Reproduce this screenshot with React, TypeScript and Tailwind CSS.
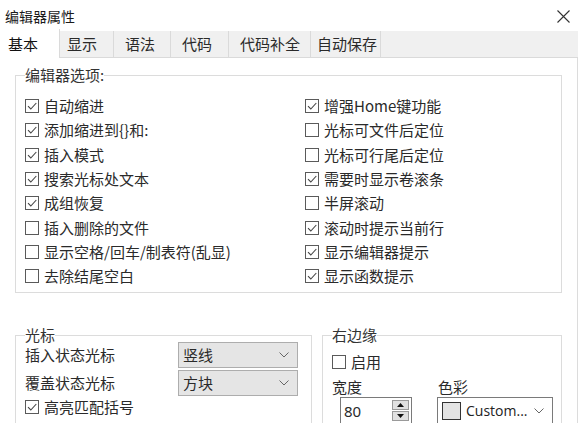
import React from "react";

const F = "font-['Noto_Sans_CJK_SC','Noto_Sans',sans-serif]";

function Cb({ checked, label }: { checked?: boolean; label: string }) {
  return (
    <div className="flex items-center h-full">
      <span className="w-[14px] h-[14px] border border-[#5a5a5a] bg-white flex items-center justify-center shrink-0">
        {checked && (
          <svg width="12" height="12" viewBox="0 0 12 12">
            <path d="M2 6.2 L4.8 9 L10.3 3" fill="none" stroke="#444" strokeWidth="1.1" />
          </svg>
        )}
      </span>
      <span className="ml-[5px] text-[15px] leading-[20px] text-[#2a2a2a] whitespace-nowrap">{label}</span>
    </div>
  );
}

function Chevron() {
  return (
    <svg width="10" height="6" viewBox="0 0 10 6">
      <path d="M0.5 0.5 L5 5 L9.5 0.5" fill="none" stroke="#666" strokeWidth="1" />
    </svg>
  );
}

function Select({ value }: { value: string }) {
  return (
    <div className="w-[120px] h-[26px] bg-[#e5e5e5] border border-[#adadad] flex items-center justify-between pl-[4px] pr-[8px]">
      <span className="text-[15px] leading-[20px] text-[#2a2a2a]">{value}</span>
      <Chevron />
    </div>
  );
}

const tabs = [
  { t: "基本", w: 60, pl: 8, sel: true },
  { t: "显示", w: 54, pl: 7 },
  { t: "语法", w: 57, pl: 11 },
  { t: "代码", w: 58, pl: 11 },
  { t: "代码补全", w: 82, pl: 11 },
  { t: "自动保存", w: 70, pl: 6 },
];

const left: [string, boolean][] = [
  ["自动缩进", true],
  ["添加缩进到{}和:", true],
  ["插入模式", true],
  ["搜索光标处文本", true],
  ["成组恢复", true],
  ["插入删除的文件", false],
  ["显示空格/回车/制表符(乱显)", false],
  ["去除结尾空白", false],
];
const right: [string, boolean][] = [
  ["增强Home键功能", true],
  ["光标可文件后定位", false],
  ["光标可行尾后定位", false],
  ["需要时显示卷滚条", true],
  ["半屏滚动", false],
  ["滚动时提示当前行", true],
  ["显示编辑器提示", true],
  ["显示函数提示", true],
];

export default function App() {
  return (
    <div className={`w-[586px] h-[423px] bg-white overflow-hidden flex flex-col text-[#2a2a2a] ${F}`}>
      {/* title */}
      <div className="h-[31px] shrink-0 flex items-center justify-between pl-[5px] pr-[16px]">
        <span className="text-[14px] leading-[20px] text-[#1a1a1a]">编辑器属性</span>
        <svg width="13" height="13" viewBox="0 0 13 13" className="mt-[2px]">
          <path d="M0.5 0.5 L12.5 12.5 M12.5 0.5 L0.5 12.5" stroke="#333" strokeWidth="1.1" />
        </svg>
      </div>
      {/* tabs */}
      <div className="h-[27px] shrink-0 w-[578px] bg-[#f0f0f0] border-b border-[#dadada] flex items-end">
        {tabs.map((tb) => (
          <div
            key={tb.t}
            style={{ width: tb.w, paddingLeft: tb.pl }}
            className={
              tb.sel
                ? "h-[29px] -mb-px bg-white flex items-center border-r border-[#dadada] text-[15px] leading-[20px] text-[#111]"
                : "h-[26px] flex items-center border-r border-[#dadada] text-[15px] leading-[20px] text-[#2a2a2a]"
            }
          >
            {tb.t}
          </div>
        ))}
      </div>
      {/* content */}
      <div className="flex-1 w-[578px] border-r border-[#dcdcdc] flex flex-col">
        <fieldset className="ml-[15px] mt-[7px] w-[547px] h-[228px] shrink-0 border border-[#dcdcdc] pl-[9px]">
          <legend className="text-[15px] leading-[20px] text-[#333]">编辑器选项:</legend>
          <div className="mt-[9px] grid grid-cols-[280px_1fr] grid-rows-[repeat(8,24.3px)] grid-flow-col">
            {left.map(([l, c]) => (
              <Cb key={l} label={l} checked={c} />
            ))}
            {right.map(([l, c]) => (
              <Cb key={l} label={l} checked={c} />
            ))}
          </div>
        </fieldset>

        <div className="flex gap-[10px] ml-[15px] mt-[35px]">
          <fieldset className="w-[297px] h-[120px] border border-[#dcdcdc] pl-[9px]">
            <legend className="text-[15px] leading-[14px] text-[#333]">光标</legend>
            <div className="flex items-center h-[26px]">
              <span className="w-[153px] text-[15px] leading-[20px]">插入状态光标</span>
              <Select value="竖线" />
            </div>
            <div className="flex items-center h-[26px] mt-[2px]">
              <span className="w-[153px] text-[15px] leading-[20px]">覆盖状态光标</span>
              <Select value="方块" />
            </div>
            <div className="h-[20px] mt-[1px]">
              <Cb label="高亮匹配括号" checked />
            </div>
          </fieldset>

          <fieldset className="w-[240px] h-[120px] border border-[#dcdcdc] pl-[9px]">
            <legend className="text-[15px] leading-[14px] text-[#333]">右边缘</legend>
            <div className="h-[20px] mt-[10px]">
              <Cb label="启用" />
            </div>
            <div className="flex h-[20px] mt-[5px] text-[15px] leading-[20px]">
              <span className="w-[106px]">宽度</span>
              <span>色彩</span>
            </div>
            <div className="flex">
              <div className="ml-[8px] w-[72px] h-[27px] border border-[#7a7a7a] bg-white flex items-center justify-between pr-[2px]">
                <span className="pl-[3px] text-[15px] leading-[20px] font-['Noto_Sans',sans-serif]">80</span>
                <div className="flex flex-col gap-[1px] w-[17px]">
                  <div className="h-[10px] bg-[#e1e1e1] border border-[#9a9a9a] flex items-center justify-center">
                    <svg width="7" height="4" viewBox="0 0 7 4"><path d="M0 4 L3.5 0 L7 4 Z" fill="#111" /></svg>
                  </div>
                  <div className="h-[10px] bg-[#e1e1e1] border border-[#9a9a9a] flex items-center justify-center">
                    <svg width="7" height="4" viewBox="0 0 7 4"><path d="M0 0 L3.5 4 L7 0 Z" fill="#111" /></svg>
                  </div>
                </div>
              </div>
              <div className="ml-[25px] w-[116px] h-[27px] border border-[#7a7a7a] bg-white flex items-center pr-[8px]">
                <span className="ml-[4px] w-[19px] h-[18px] bg-[#e3e3e3] border border-[#333] shrink-0" />
                <span className="ml-[5px] flex-1 text-[14px] leading-[20px] font-['Open_Sans','Noto_Sans',sans-serif] text-[#222]">Custom...</span>
                <Chevron />
              </div>
            </div>
          </fieldset>
        </div>
      </div>
    </div>
  );
}
